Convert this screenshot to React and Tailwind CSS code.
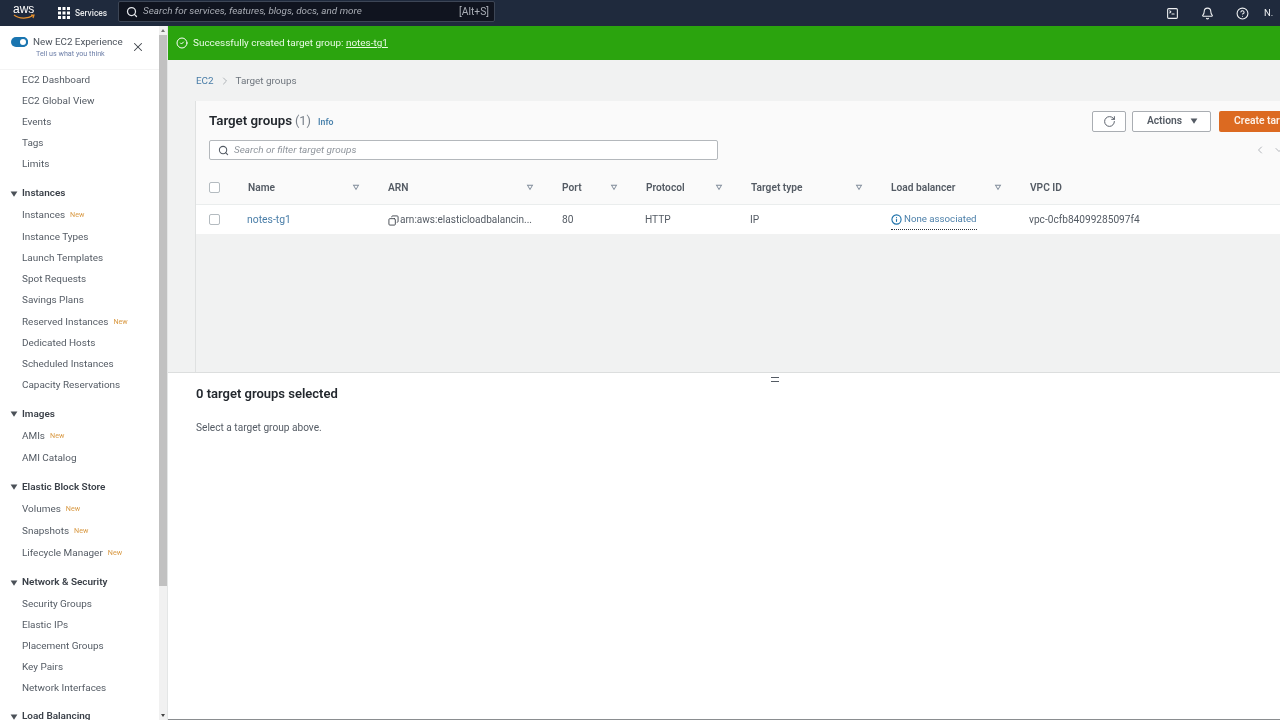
import React from "react";
import { Search, X, CircleCheck, ChevronRight, ChevronLeft, RotateCw, Bell, CircleHelp, SquareTerminal, Copy, Info } from "lucide-react";

const Tri = ({ className = "" }) => (
  <svg viewBox="0 0 10 8" className={className}><path d="M0.5 0.5H9.5L5 7.5Z" fill="currentColor" /></svg>
);
const SortTri = () => (
  <svg viewBox="0 0 8 7" className="w-2 h-[7px] text-[#7d8998]"><path d="M0.7 0.8H7.3L4 6.2Z M2.2 1.8L4 4.6L5.8 1.8Z" fill="currentColor" fillRule="evenodd" /></svg>
);

const nav = [
  { row: "h-[21px]", gap: "", title2: "", items: [["EC2 Dashboard"], ["EC2 Global View"], ["Events"], ["Tags"], ["Limits"]] },
  { row: "h-[21.25px]", gap: "mt-[8px]", title2: "mb-px", title: "Instances", items: [["Instances", 1], ["Instance Types"], ["Launch Templates"], ["Spot Requests"], ["Savings Plans"], ["Reserved Instances", 1], ["Dedicated Hosts"], ["Scheduled Instances"], ["Capacity Reservations"]] },
  { row: "h-[21.5px]", gap: "mt-[7px]", title2: "mb-px", title: "Images", items: [["AMIs", 1], ["AMI Catalog"]] },
  { row: "h-[22px]", gap: "mt-[7px]", title2: "", title: "Elastic Block Store", items: [["Volumes", 1], ["Snapshots", 1], ["Lifecycle Manager", 1]] },
  { row: "h-[21px]", gap: "mt-[8px]", title2: "mb-px", title: "Network & Security", items: [["Security Groups"], ["Elastic IPs"], ["Placement Groups"], ["Key Pairs"], ["Network Interfaces"]] },
  { row: "h-[21px]", gap: "mt-[7px]", title2: "", title: "Load Balancing", items: [] },
];

const cols = [
  ["Name", "w-[140px]"],
  ["ARN", "w-[174px]"],
  ["Port", "w-[84px]"],
  ["Protocol", "w-[105px]"],
  ["Target type", "w-[140px]"],
  ["Load balancer", "w-[139px]"],
];

const Check = () => <div className="w-[11px] h-[11px] rounded-[2px] border border-[#b4bbc0] bg-white" />;

export default function App() {
  return (
    <div className="w-[1280px] h-[720px] overflow-hidden flex flex-col bg-white text-[9.95px] text-[#545b64] blur-[0.4px]" style={{ fontFamily: 'Roboto, "Noto Sans", sans-serif' }}>
      {/* top bar */}
      <header className="h-[26px] shrink-0 bg-[#1f2a3d] flex items-center text-white">
        <div className="w-[47px] pl-[13px] shrink-0 flex flex-col items-start leading-none">
          <span className="text-[12px] leading-[10px] font-normal -mt-[2px]" style={{ fontFamily: '"Liberation Sans", sans-serif' }}>aws</span>
          <svg viewBox="0 0 22 6" className="w-[22px] h-[6px]"><path d="M1 1C6 5 15 5 20 1.5M18 1L21 1L20 4" stroke="#e8912d" strokeWidth="1.2" fill="none" /></svg>
        </div>
        <div className="w-[11px] shrink-0" />
        <svg viewBox="0 0 12 12" className="w-3 h-3 shrink-0 fill-white">
          <rect x="0" y="0" width="3" height="3" /><rect x="4.5" y="0" width="3" height="3" /><rect x="9" y="0" width="3" height="3" />
          <rect x="0" y="4.5" width="3" height="3" /><rect x="4.5" y="4.5" width="3" height="3" /><rect x="9" y="4.5" width="3" height="3" />
          <rect x="0" y="9" width="3" height="3" /><rect x="4.5" y="9" width="3" height="3" /><rect x="9" y="9" width="3" height="3" />
        </svg>
        <span className="ml-[5px] w-[41px] shrink-0 text-[8.4px] font-medium text-[#e6e8ea]">Services</span>
        <div className="w-[377px] h-[21px] shrink-0 ml-[2px] -mt-[3px] bg-[#10141f] border border-[#3d4656] rounded-[2px] flex items-center pl-[7px] pr-[5px]">
          <Search className="w-[12px] h-[12px] text-[#e5e7eb]" strokeWidth={2.5} />
          <span className="ml-[5px] italic text-[9.9px] text-[#a9adb5] flex-1">Search for services, features, blogs, docs, and more</span>
          <span className="text-[10.3px] text-[#a9adb5]">[Alt+S]</span>
        </div>
        <div className="ml-auto flex items-center text-[#eef0f2]">
          <SquareTerminal className="w-[13px] h-[13px]" strokeWidth={2} />
          <Bell className="w-[13px] h-[13px] ml-[22px]" strokeWidth={2} />
          <CircleHelp className="w-[13px] h-[13px] ml-[22px]" strokeWidth={2} />
          <span className="ml-[15px] w-[16px] overflow-hidden text-[9.5px]">N.</span>
        </div>
      </header>

      <div className="flex-1 min-h-0 flex">
        {/* sidebar */}
        <aside className="w-[168px] shrink-0 flex bg-white border-r border-[#e4e6e6]">
          <div className="w-[159px] shrink-0 overflow-hidden">
            <div className="h-[44px] flex pl-[11px] pt-[10px] relative border-b border-[#f4f4f4]">
              <div className="w-[17px] h-[10px] mt-[1px] rounded-full bg-[#1a75b0] relative shrink-0">
                <div className="absolute right-0 top-0 w-[10px] h-[10px] rounded-full bg-white border-2 border-[#1a75b0]" />
              </div>
              <div className="ml-[5px] flex flex-col">
                <span className="text-[9.8px] leading-[11px] text-[#4c535c] whitespace-nowrap">New EC2 Experience</span>
                <span className="text-[7.2px] leading-[10px] mt-[2px] ml-[3px] text-[#6d7fa8]">Tell us what you think</span>
              </div>
              <X className="absolute left-[131px] top-[14px] w-[14px] h-[14px] text-[#3f444b]" strokeWidth={1.8} />
            </div>
            <nav>
              {nav.map((g, i) => (
                <div key={i} className={g.gap}>
                  {g.title && (
                    <div className={`${g.row} ${g.title2} flex items-center pl-[10px] font-semibold text-[#3b4149]`}>
                      <Tri className="w-[8px] h-[6px] text-[#4b5158]" />
                      <span className="ml-[4px] whitespace-nowrap">{g.title}</span>
                    </div>
                  )}
                  {g.items.map(([t, n]) => (
                    <div key={t} className={`${g.row} flex items-center pl-[22px] whitespace-nowrap`}>
                      <span>{t}</span>
                      {n && <span className="ml-[5px] text-[7.2px] text-[#d99a45]">New</span>}
                    </div>
                  ))}
                </div>
              ))}
            </nav>
          </div>
          <div className="w-[8px] shrink-0 bg-[#f1f1f1] flex flex-col items-center">
            <div className="h-[9px] w-full flex items-center justify-center"><div className="border-x-[2px] border-b-[3px] border-x-transparent border-b-[#777]" /></div>
            <div className="w-full h-[551px] bg-[#c1c1c1]" />
            <div className="flex-1" />
            <div className="h-[9px] w-full flex items-center justify-center"><div className="border-x-[2px] border-t-[3px] border-x-transparent border-t-[#444]" /></div>
          </div>
        </aside>

        {/* main */}
        <main className="flex-1 min-w-0 flex flex-col overflow-hidden">
          <div className="h-[34px] shrink-0 bg-[#2ba40e] flex items-center pl-[8px] text-white">
            <CircleCheck className="w-[12px] h-[12px]" strokeWidth={2} />
            <span className="ml-[5px] text-[9.95px] text-[#eafbe6]">Successfully created target group: <span className="underline">notes-tg1</span></span>
          </div>

          <div className="h-[312px] shrink-0 bg-[#f1f2f2] flex flex-col">
            <div className="h-[41px] shrink-0 flex items-center pl-[28px] pt-px text-[9.9px]">
              <span className="text-[#4a7ea8]">EC2</span>
              <ChevronRight className="w-[12px] h-[12px] mx-[5px] text-[#a6abb0]" strokeWidth={1.8} />
              <span className="text-[#6e757d]">Target groups</span>
            </div>
            <div className="flex-1 ml-[27px] border-l border-[#dfe1e1] flex flex-col">
              <div className="bg-[#fafafa] h-[71px] shrink-0">
                <div className="w-[1143px] h-[39px] pt-px flex items-center justify-between pl-[13px]">
                  <div className="flex items-baseline">
                    <span className="text-[13.3px] font-semibold text-[#23282e]">Target groups</span>
                    <span className="ml-[3px] text-[12.8px] text-[#79808a]">(1)</span>
                    <span className="ml-[7px] text-[8.75px] font-semibold text-[#4d84ad]">Info</span>
                  </div>
                  <div className="flex items-center h-[21px]">
                    <div className="w-[34px] h-[21px] bg-white border border-[#a9adb2] rounded-[2px] flex items-center justify-center">
                      <RotateCw className="w-[13px] h-[13px] text-[#59606a]" strokeWidth={1.8} />
                    </div>
                    <div className="w-[79px] h-[21px] ml-[6px] bg-white border border-[#a9adb2] rounded-[2px] flex items-center justify-center pl-[2px] font-semibold text-[#545b64] text-[10.3px]">
                      Actions<Tri className="w-[8px] h-[6px] ml-[8px]" />
                    </div>
                    <div className="w-[120px] h-[21px] ml-[8px] bg-[#dc6a21] rounded-[2px] flex items-center justify-center font-semibold text-[#fdf0e6] text-[10.3px] whitespace-nowrap">Create target group</div>
                  </div>
                </div>
                <div className="flex items-center pl-[13px]">
                  <div className="w-[509px] h-[20px] shrink-0 bg-white border border-[#b4b8bc] rounded-[2px] flex items-center pl-[8px]">
                    <Search className="w-[11px] h-[11px] text-[#545b64]" strokeWidth={2.3} />
                    <span className="ml-[5px] italic text-[#8f959c] text-[9.95px]">Search or filter target groups</span>
                  </div>
                  <ChevronLeft className="ml-[536px] w-[12px] h-[12px] text-[#a9adb2] shrink-0" strokeWidth={1.8} />
                  <ChevronLeft className="ml-[7px] w-[12px] h-[12px] text-[#a9adb2] shrink-0 -rotate-90" strokeWidth={1.8} />
                </div>
              </div>
              {/* header row */}
              <div className="h-[33px] shrink-0 pb-px bg-[#fafafa] border-b border-[#eaeded] flex items-center font-semibold text-[#545b64] text-[10.2px]">
                <div className="w-[51px] shrink-0 pl-[13px]"><Check /></div>
                {cols.map(([t, w]) => (
                  <div key={t} className={`${w} shrink-0 flex items-center justify-between pr-[27px] pl-px`}>
                    <span>{t}</span><SortTri />
                  </div>
                ))}
                <div className="pl-px">VPC ID</div>
              </div>
              {/* data row */}
              <div className="h-[29px] shrink-0 bg-white flex items-center text-[10.2px] whitespace-nowrap">
                <div className="w-[51px] shrink-0 pl-[13px]"><Check /></div>
                <div className="w-[140px] shrink-0 text-[10.4px] text-[#4a7ea8]">notes-tg1</div>
                <div className="w-[174px] shrink-0 flex items-center pl-px">
                  <Copy className="w-[11px] h-[11px] -scale-x-100 mt-[1px] text-[#3f454d]" strokeWidth={2} />
                  <span className="ml-px text-[10.05px]">arn:aws:elasticloadbalancin...</span>
                </div>
                <div className="w-[84px] shrink-0 pl-px">80</div>
                <div className="w-[105px] shrink-0">HTTP</div>
                <div className="w-[140px] shrink-0">IP</div>
                <div className="w-[139px] shrink-0 pl-px">
                  <span className="inline-flex items-center mt-[3px] text-[9.7px] text-[#4a7ea8] border-b border-dotted border-[#2b3038] pb-[2px]">
                    <Info className="w-[11px] h-[11px] mr-[2px] text-[#1a6fa8]" strokeWidth={2.4} />None associated
                  </span>
                </div>
                <div className="text-[10.15px]">vpc-0cfb84099285097f4</div>
              </div>
              <div className="flex-1" />
            </div>
          </div>

          {/* lower panel */}
          <div className="flex-1 bg-white border-t border-[#dcdede] border-b-[1px] border-b-[#8a8d90] pl-[28px] relative">
            <div className="absolute left-[603px] top-[4px] w-[8px] h-[5px] border-y border-[#545b64]" />
            <div className="mt-[13px] text-[13px] leading-[16px] font-semibold text-[#23282e]">0 target groups selected</div>
            <div className="mt-[19px] text-[10.15px] leading-[14px] text-[#545b64]">Select a target group above.</div>
          </div>
        </main>
      </div>
    </div>
  );
}
